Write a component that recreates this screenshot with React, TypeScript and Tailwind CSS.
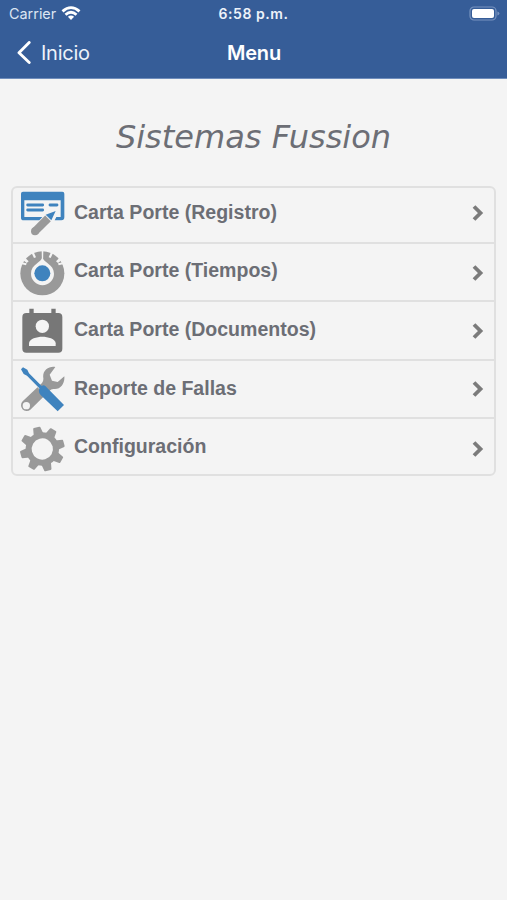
import type { ReactNode } from "react";

const iconClass = "block h-[46px] w-[46px] shrink-0";

function RegistroIcon() {
  return (
    <svg viewBox="0 0 138 138" className={iconClass}>
      <path fill="#3f83be" fillRule="evenodd" d="M9 5H127Q133 5 133 11V82Q133 91 124 91H104L109 81H122V31H13V81H67L58 91H11Q3 91 3 83V11Q3 5 9 5Z" />
      <path stroke="#3f83be" strokeWidth="8.5" strokeLinecap="round" d="M23 45H68M23 60H68M90 45H111" />
      <path fill="#3f83be" d="M107 63L77 74L94 91Z" />
      <path stroke="#999" strokeWidth="24" d="M84 85L46 123" />
      <circle cx="45" cy="124" r="12" fill="#999" />
    </svg>
  );
}

function TiemposIcon() {
  return (
    <svg viewBox="0 0 138 138" className={iconClass}>
      <circle cx="67" cy="70" r="66" fill="#999" />
      <g fill="#f4f4f4">
        <path d="M67 22C70 38 102 43 102 71A34 34 0 0 1 33 71C33 43 64 38 67 22Z" />
        <path d="M65 0H70L69 43H66Z" />
        <path d="M0 36L20 40L18 46L0 41Z" />
        <path d="M134 36L114 40L116 46L134 41Z" />
        <path d="M10 18L26 34L20 39L5 27Z" />
        <path d="M124 18L108 34L114 39L129 27Z" />
        <path d="M32 3L42 8L48 22L42 24Z" />
        <path d="M102 3L92 8L86 22L92 24Z" />
      </g>
      <circle cx="67" cy="70" r="24" fill="#3f83be" />
    </svg>
  );
}

function DocumentosIcon() {
  return (
    <svg viewBox="0 0 138 138" className={iconClass}>
      <path fill="#777" d="M28 2H41V15H94V2H107V15H115Q127 15 127 27V122Q127 134 115 134H19Q7 134 7 122V27Q7 15 19 15H28Z" />
      <circle cx="67" cy="55" r="20" fill="#f4f4f4" />
      <path fill="#f4f4f4" d="M27 114V106C27 92 51 86 67 86S107 92 107 106V114Z" />
    </svg>
  );
}

function FallasIcon() {
  return (
    <svg viewBox="0 0 138 138" className={iconClass}>
      <path fill="#999" fillRule="evenodd" d="M106 3C87 -1 66 14 70 36Q71 45 66 51L8 106A17 17 0 0 0 31 131L88 75Q94 68 102 69C122 71 135 51 133 31L113 48L96 44L89 26ZM19 108A11 11 0 1 1 19 130A11 11 0 0 1 19 108Z" />
      <path stroke="#f4f4f4" strokeWidth="10" d="M17 20L65 69" />
      <path fill="#3f83be" d="M3 10L9 4L22 11L27 22L65 60Q71 56 76 60L84 68L132 117L113 136L62 87Q54 79 58 67L21 29L11 24Z" />
    </svg>
  );
}

function ConfiguracionIcon() {
  const angles = [0, 45, 90, 135, 180, 225, 270, 315];
  return (
    <svg viewBox="0 0 138 138" className={iconClass}>
      <g transform="translate(67 69) rotate(-15)">
        <g fill="#999">
          {angles.map((angle) => (
            <path key={angle} transform={`rotate(${angle})`} d="M-15 -43L-11 -65Q-10 -67 -8 -67H8Q10 -67 11 -65L15 -43Z" />
          ))}
        </g>
        <circle r="41" fill="none" stroke="#999" strokeWidth="18" />
      </g>
    </svg>
  );
}

interface RowProps {
  label: string;
  icon: ReactNode;
  className: string;
  iconClassName: string;
  textClassName: string;
  arrowClassName: string;
}

function MenuRow({ label, icon, className, iconClassName, textClassName, arrowClassName }: RowProps) {
  return (
    <li className={`flex items-start pl-[7px] pr-[9px] ${className}`}>
      <span className={iconClassName}>{icon}</span>
      <span className={`ml-2 flex-1 whitespace-nowrap text-[19.55px] leading-6 font-bold text-[#6c6e75] ${textClassName}`}>
        {label}
      </span>
      <svg viewBox="0 0 14 18" className={`h-[18px] w-3.5 shrink-0 ${arrowClassName}`}>
        <path d="M3 2.5L9.5 9L3 15.5" fill="none" stroke="#7b7b7b" strokeWidth="3.8" />
      </svg>
    </li>
  );
}

export default function App() {
  return (
    <div className="h-[900px] w-[507px] overflow-hidden bg-[#f4f4f4] font-['Liberation_Sans',Arial,sans-serif]">
      <header className="h-[79px] border-b border-[#6f8dbc] bg-[#365d98] font-['Inter',sans-serif] text-white">
        <div className="grid h-[27px] grid-cols-3 items-center pl-[7px] pr-[7px]">
          <div className="flex items-center gap-[5px] pl-0.5 text-[14.4px] leading-5 text-[#dce5f2]">
            Carrier
            <svg viewBox="0 0 20 16" className="h-4 w-5">
              <g fill="none" stroke="#fff" strokeWidth="2.8">
                <path d="M1.5 5.4Q10 -2.1 18.5 5.4" />
                <path d="M4.5 8.8Q10 3.8 15.5 8.8" />
              </g>
              <path fill="#fff" d="M6.9 10.8Q10 8.3 13.1 10.8L10 14Z" />
            </svg>
          </div>
          <div className="whitespace-nowrap text-center text-[14px] leading-5 font-semibold tracking-[0.55px] text-[#edf2fa]">6:58 p.m.</div>
          <svg viewBox="0 0 31 16" className="h-4 w-[31px] justify-self-end">
            <rect x="1" y="1" width="26" height="13" rx="4" fill="none" stroke="#7893bf" strokeWidth="1.2" />
            <rect x="3" y="3" width="22" height="9" rx="2" fill="#fff" />
            <path d="M28.4 5.5Q30.4 5.8 30.4 7.5T28.4 9.5Z" fill="#7893bf" />
          </svg>
        </div>
        <div className="grid h-[51px] grid-cols-3 items-center pl-4 pr-[15px]">
          <div className="flex items-center gap-[9px] text-[20px] leading-6 tracking-[-0.25px] text-[#edf2fa]">
            <svg viewBox="0 0 16 24" className="h-6 w-4">
              <path d="M13.2 1.5L3 11.7L13.2 21.5" fill="none" stroke="#fff" strokeWidth="2.9" strokeLinecap="round" strokeLinejoin="round" />
            </svg>
            Inicio
          </div>
          <h1 className="text-center text-[20px] leading-6 font-semibold tracking-[-0.2px]">Menu</h1>
        </div>
      </header>
      <main className="px-[11px]">
        <h2 className="flex h-[107px] items-center justify-center pt-2 font-['DejaVu_Sans',sans-serif] text-[32px] leading-10 whitespace-nowrap text-[#6c6e75] italic">
          Sistemas Fussion
        </h2>
        <ul className="h-[290px] w-[485px] rounded-md border-2 border-[#e0e0e0]">
          <MenuRow label="Carta Porte (Registro)" icon={<RegistroIcon />} className="h-[56px] border-b-2 border-[#e0e0e0]" iconClassName="mt-0.5" textClassName="mt-3" arrowClassName="mt-4" />
          <MenuRow label="Carta Porte (Tiempos)" icon={<TiemposIcon />} className="h-[58px] border-b-2 border-[#e0e0e0]" iconClassName="mt-1.5" textClassName="mt-3.5" arrowClassName="mt-5" />
          <MenuRow label="Carta Porte (Documentos)" icon={<DocumentosIcon />} className="h-[59px] border-b-2 border-[#e0e0e0]" iconClassName="mt-1.5" textClassName="mt-[15px]" arrowClassName="mt-5" />
          <MenuRow label="Reporte de Fallas" icon={<FallasIcon />} className="h-[58px] border-b-2 border-[#e0e0e0]" iconClassName="mt-[5px]" textClassName="mt-[15px]" arrowClassName="mt-[19px]" />
          <MenuRow label="Configuración" icon={<ConfiguracionIcon />} className="h-[55px]" iconClassName="mt-[7px]" textClassName="mt-[15px]" arrowClassName="mt-[21px]" />
        </ul>
      </main>
    </div>
  );
}
